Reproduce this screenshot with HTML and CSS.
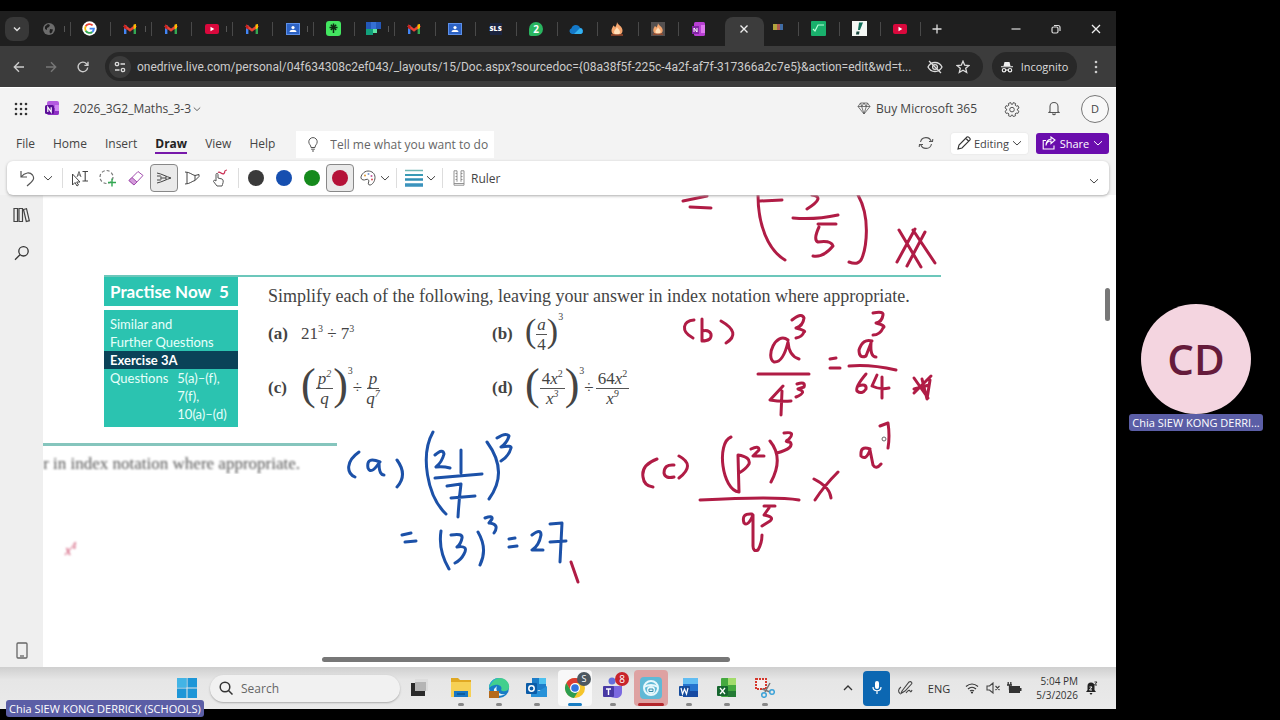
FILE: index.html
```html
<!DOCTYPE html>
<html lang="en">
<head>
<meta charset="utf-8">
<meta name="viewport" content="width=device-width, initial-scale=1">
<title>Shared screen</title>
<link rel="stylesheet" href="styles.css">
</head>
<body>
<svg class="defs" aria-hidden="true">
  <symbol id="gmail" viewBox="0 0 14 12"><path d="M1 11V2h2.400v9z" fill="#4285f4"/><path d="M10.600 11V2H13v9z" fill="#34a853"/><path d="M1 2.500 7 7.200 13 2.500" fill="none" stroke="#ea4335" stroke-width="2.600"/><path d="M10.600 1.500 13 1v4l-2.400 1.600z" fill="#fbbc04"/><path d="M1 1.500v3.800l2.400 1.500V3z" fill="#c5221f"/></symbol>
  <symbol id="youtube" viewBox="0 0 14 14"><rect y="2" width="14" height="10" rx="2" fill="#d9083c"/><path d="M5.500 4.800v4.400L9.300 7z" fill="#fff"/></symbol>
  <symbol id="classroom" viewBox="0 0 14 14"><rect y="1" width="14" height="12" fill="#5c8fe8"/><rect x="1" y="2" width="12" height="10" fill="#2c62c4"/><circle cx="7" cy="5.500" r="1.600" fill="#fff"/><path d="M3.500 10c0-3 7-3 7 0z" fill="#fff"/></symbol>
  <symbol id="flame" viewBox="0 0 14 14"><path d="M7 0c.5 3 5.500 4 5.500 8.500C12.500 12 10 13 7 13s-5.500-1-5.500-4.500C1.500 6 3 5 3.300 3.500 4.500 4 5 5 5 5.500 6 4 7 2 7 0z" fill="#f5a66f"/><path d="M7 5c.5 2 3 2.500 3 5 0 2-1.500 3-3 3s-3-1-3-3c0-2 2.500-3 3-5z" fill="#ffe0ba"/><path d="M1 13h12" stroke="#9c4a2c" stroke-width="1.500"/></symbol>
  <symbol id="chev" viewBox="0 0 10 10"><path d="M1 3.200 5 7l4-3.800" fill="none" stroke="currentColor"/></symbol>
</svg>

<div class="meeting">
<main class="screen">

  <nav class="tabstrip" aria-label="Browser tabs">
    <button class="tab-search" aria-label="Search tabs"><svg width="10" height="10"><path d="M2 3.500 5 6.500 8 3.500" fill="none" stroke="#ddd" stroke-width="1.500"/></svg></button>
    <button class="tab mark" aria-label="Web page"><svg width="14" height="14" viewBox="0 0 14 14"><circle cx="7" cy="7" r="6" fill="#6c6c6c"/><path d="M3 4.500 6 2l2 1-1 2-2 1v2l-2-1zM8 7l3 .5-1 3-2 1-.5-2z" fill="#1f1f1f"/></svg></button>
    <button class="tab" aria-label="Google"><svg width="15" height="15" viewBox="0 0 15 15"><circle cx="7.500" cy="7.500" r="7.200" fill="#fff"/><g fill="none" stroke-width="1.900"><path d="M10.600 4.400A4.400 4.400 0 0 0 3.700 5.300" stroke="#ea4335"/><path d="M3.700 5.300a4.400 4.400 0 0 0 0 4.400" stroke="#fbbc04"/><path d="M3.700 9.700a4.400 4.400 0 0 0 6.600 1.200" stroke="#34a853"/><path d="M10.300 10.900A4.400 4.400 0 0 0 11.900 7.600H7.600" stroke="#4285f4"/></g></svg></button>
    <button class="tab mark" aria-label="Gmail"><svg width="14" height="12"><use href="#gmail"/></svg></button>
    <button class="tab" aria-label="Gmail"><svg width="14" height="12"><use href="#gmail"/></svg></button>
    <button class="tab mark" aria-label="YouTube"><svg width="14" height="14"><use href="#youtube"/></svg></button>
    <button class="tab" aria-label="Gmail"><svg width="14" height="12"><use href="#gmail"/></svg></button>
    <button class="tab mark" aria-label="Classroom"><svg width="14" height="14"><use href="#classroom"/></svg></button>
    <button class="tab" aria-label="Linktree"><svg width="15" height="15" viewBox="0 0 15 15"><rect width="15" height="15" rx="3" fill="#43e660"/><path d="M7.500 2.500v9.500M3.500 6.500h8M4.800 3.800l5.400 5.200M10.200 3.800 4.800 9" stroke="#0c2b12" stroke-width="1.500"/></svg></button>
    <button class="tab mark" aria-label="Tiles"><svg width="15" height="15" viewBox="0 0 15 15"><path d="M0 1h15v7H0z" fill="#2458b8"/><path d="M5 1h5v7H5z" fill="#3570d4"/><path d="M0 8h7v6H0z" fill="#12a17c"/><path d="M7 8h4v4H7z" fill="#5be5a4"/></svg></button>
    <button class="tab" aria-label="Gmail"><svg width="14" height="12"><use href="#gmail"/></svg></button>
    <button class="tab" aria-label="Classroom"><svg width="14" height="14"><use href="#classroom"/></svg></button>
    <button class="tab" aria-label="SLS"><span class="sls">SLS</span></button>
    <button class="tab" aria-label="WhatsApp"><span class="whats">2</span></button>
    <button class="tab" aria-label="OneDrive"><svg width="15" height="12" viewBox="0 0 15 12"><path d="M3 11a3 3 0 0 1-.5-5.800A4.500 4.500 0 0 1 11 4.800 3.200 3.200 0 0 1 12 11z" fill="#1478c8"/><path d="M5 11 11 5a3.200 3.200 0 0 1 1 6z" fill="#35b2ef"/></svg></button>
    <button class="tab" aria-label="Flame"><svg width="14" height="14"><use href="#flame"/></svg></button>
    <button class="tab" aria-label="Flame"><span class="flame-box"><svg width="12" height="12"><use href="#flame"/></svg></span></button>
    <button class="tab last" aria-label="OneNote"><svg width="14" height="14" viewBox="0 0 14 14"><rect x="2" width="11" height="14" rx="1.500" fill="#b83fd3"/><path d="M9 3h4v8H9z" fill="#dd78ee"/><path d="M0 4h7v8H0z" fill="#8224a5"/><path d="M2 10V6l3 4V6" stroke="#fff" fill="none"/></svg></button>
    <button class="tab-active" aria-label="Close tab"><svg width="10" height="10"><path d="M1.500 1.500l7 7m0-7-7 7" stroke="#eee" stroke-width="1.400"/></svg></button>
    <button class="tab" aria-label="Gallery"><svg width="12" height="14" viewBox="0 0 12 14"><path d="M1 2h4v6H1z" fill="#b1a53e"/><path d="M5 2h3v6H5z" fill="#b35a50"/><path d="M8 2h3v6H8z" fill="#416ca4"/></svg></button>
    <button class="tab" aria-label="Maths"><svg width="15" height="15" viewBox="0 0 15 15"><rect width="15" height="15" rx="1" fill="#19b06c"/><path d="m2 8 2 2 3-6h6" fill="none" stroke="#b6ffd8" stroke-width="1.200"/></svg></button>
    <button class="tab" aria-label="Notes"><svg width="15" height="15" viewBox="0 0 15 15"><rect width="15" height="15" fill="#f4f7f4"/><path d="M7 1.500h4L8 9H6z" fill="#11705a"/><path d="M4.500 10.500h3L7 13.500H4z" fill="#17443c"/></svg></button>
    <button class="tab" aria-label="YouTube"><svg width="14" height="14"><use href="#youtube"/></svg></button>
    <button class="tab-new" aria-label="New tab"><svg width="10" height="10"><path d="M5 .5v9M.5 5h9" stroke="#ddd" stroke-width="1.300"/></svg></button>
    <button class="win first" aria-label="Minimise"><svg width="10" height="10"><path d="M.5 5h9" stroke="#ddd" stroke-width="1.200"/></svg></button>
    <button class="win" aria-label="Restore"><svg width="10" height="10"><rect x="1" y="3" width="6" height="6" rx="1.500" fill="none" stroke="#ddd" stroke-width="1.200"/><path d="M3 1.500h4A2 2 0 0 1 9 3.500V7" fill="none" stroke="#ddd" stroke-width="1.200"/></svg></button>
    <button class="win" aria-label="Close"><svg width="10" height="10"><path d="m1 1 8 8m0-8-8 8" stroke="#eee" stroke-width="1.300"/></svg></button>
  </nav>

  <div class="addressbar">
    <button class="nav-btn" aria-label="Back"><svg width="12" height="12"><path d="M11 6H1.500M6 1.300 1.300 6 6 10.700" fill="none" stroke="#ccc" stroke-width="1.400"/></svg></button>
    <button class="nav-btn" aria-label="Forward"><svg width="12" height="12"><path d="M1 6h9.500M6 1.300 10.700 6 6 10.700" fill="none" stroke="#777" stroke-width="1.400"/></svg></button>
    <button class="nav-btn" aria-label="Reload"><svg width="12" height="12"><path d="M10.700 6.500A4.800 4.800 0 1 1 9.500 2.700L11 4.200M11 .8v3.600H7.400" fill="none" stroke="#ccc" stroke-width="1.400"/></svg></button>
    <div class="omnibox">
      <button class="site-info" aria-label="Site information"><svg width="12" height="12"><g fill="none" stroke="#ddd" stroke-width="1.300"><circle cx="3" cy="3" r="1.700"/><path d="M6.500 3H11M1 9h4.500"/><circle cx="9" cy="9" r="1.700"/></g></svg></button>
      <input class="url" type="text" aria-label="Address" value="onedrive.live.com/personal/04f634308c2ef043/_layouts/15/Doc.aspx?sourcedoc={08a38f5f-225c-4a2f-af7f-317366a2c7e5}&amp;action=edit&amp;wd=t...">
      <button class="omni-btn" aria-label="Tracking blocked"><svg width="16" height="14" viewBox="0 0 16 14"><g fill="none" stroke="#ddd" stroke-width="1.300"><path d="M1 7c3-6 11-6 14 0-3 6-11 6-14 0z"/><circle cx="8" cy="7" r="2.400"/><path d="m2 1 12 12"/></g></svg></button>
      <button class="omni-btn" aria-label="Bookmark"><svg width="14" height="14" viewBox="0 0 14 14"><path d="m7 1.200 1.700 4 4.300.3-3.300 2.800 1 4.200L7 10.300l-3.700 2.200 1-4.200L1 5.500l4.300-.3z" fill="none" stroke="#ddd" stroke-width="1.300"/></svg></button>
    </div>
    <button class="incognito"><svg width="12" height="12"><path d="M3.500 1h5L9.500 5h-7zM0 5.200h12v1H0z" fill="#eee"/><g fill="none" stroke="#eee" stroke-width="1.200"><circle cx="3" cy="9.200" r="1.700"/><circle cx="9" cy="9.200" r="1.700"/><path d="M4.700 9h2.600"/></g></svg>Incognito</button>
    <button class="kebab" aria-label="Browser menu"><svg width="4" height="14"><g fill="#ccc"><circle cx="2" cy="2" r="1.300"/><circle cx="2" cy="7" r="1.300"/><circle cx="2" cy="12" r="1.300"/></g></svg></button>
  </div>

  <header class="suite">
    <button class="waffle" aria-label="App launcher"><svg width="14" height="14"><g fill="#333"><circle cx="2" cy="2" r="1.300"/><circle cx="7" cy="2" r="1.300"/><circle cx="12" cy="2" r="1.300"/><circle cx="2" cy="7" r="1.300"/><circle cx="7" cy="7" r="1.300"/><circle cx="12" cy="7" r="1.300"/><circle cx="2" cy="12" r="1.300"/><circle cx="7" cy="12" r="1.300"/><circle cx="12" cy="12" r="1.300"/></g></svg></button>
    <svg class="app-logo" width="14" height="15" viewBox="0 0 14 15"><rect x="2" y="0" width="12" height="14" rx="2" fill="#b45ae0"/><path d="M2 7h12v5a2 2 0 0 1-2 2H4a2 2 0 0 1-2-2z" fill="#8e2fc4"/><path d="M10 4h4v6h-4z" fill="#cf86f2"/><rect y="4" width="9" height="9" rx="1.500" fill="#5b0f97"/><path d="M2.800 11V6.200L6.200 11V6.200" fill="none" stroke="#fff" stroke-width="1.200"/></svg>
    <button class="doc-title">2026_3G2_Maths_3-3 <svg width="8" height="8"><use href="#chev"/></svg></button>
    <a class="buy" href="#"><svg width="14" height="13" viewBox="0 0 14 13"><path d="M3.500 1h7L13 4.500 7 12 1 4.500zM1 4.500h12M3.500 1l1.200 3.500L7 12l2.300-7.500L10.500 1M4.700 4.500 7 1l2.300 3.500" fill="none" stroke="#555" stroke-width=".8"/></svg>Buy Microsoft 365</a>
    <button class="suite-btn" aria-label="Settings"><svg width="16" height="16" viewBox="0 0 16 16"><path d="m6.700 1.500.5 1.700h1.600l.5-1.700 2.300 1-.4 1.700 1 1 1.800-.5 1 2.300-1.600 1 0 1.200 1.500 1-1 2.200-1.800-.4-1 1 .5 1.700-2.300.9L8.500 14h-1l-.8 1.600-2.300-.9.500-1.700-1-1-1.800.4-1-2.200 1.500-1V8l-1.600-1 1-2.300 1.800.5 1-1-.4-1.700z" fill="none" stroke="#555"/><circle cx="8" cy="8.600" r="2.300" fill="none" stroke="#555"/></svg></button>
    <button class="suite-btn" aria-label="Notifications"><svg width="12" height="15" viewBox="0 0 12 15"><path d="M2 10.500V5.500a4 4 0 0 1 8 0v5l1 1H1zM4.500 12.500c.5 1.500 2.500 1.500 3 0" fill="none" stroke="#555" stroke-width="1.100"/></svg></button>
    <button class="avatar" aria-label="Account">D</button>
  </header>

  <nav class="menubar" aria-label="Ribbon tabs">
    <button>File</button><button>Home</button><button>Insert</button><button class="on">Draw</button><button>View</button><button>Help</button>
    <label class="tellme"><svg width="10" height="15" viewBox="0 0 10 15"><path d="M3 10.500C3 8 .8 7.500.8 4.800a4.200 4.200 0 0 1 8.400 0C9.200 7.500 7 8 7 10.500zM3.200 12.200h3.600M4 14h2" fill="none" stroke="#555"/></svg><input type="text" placeholder="Tell me what you want to do" aria-label="Tell me what you want to do"></label>
    <button class="sync" aria-label="Sync"><svg width="16" height="14" viewBox="0 0 16 14"><path d="M2.500 6A5.600 5.600 0 0 1 13.300 5.500M13.500 8A5.600 5.600 0 0 1 2.700 8.500M11 5.500h3.500L14.800 3M5 8.500H1.500L1.200 11" fill="none" stroke="#555" stroke-width="1.100"/></svg></button>
    <button class="editing"><svg width="14" height="14" viewBox="0 0 14 14"><path d="m1 13 1-4 8-8c1-1 4 1.500 3 3l-8 8zM9 2.500 11.500 5" fill="none" stroke="#333" stroke-width="1.100"/></svg>Editing<svg width="10" height="10"><use href="#chev"/></svg></button>
    <button class="share"><svg width="14" height="14" viewBox="0 0 14 14"><path d="M4 4.500H1.200V13H12V9.500M4 9.500C4.500 6 6.500 5 9 5V7.500L13 4 9 1v2.200C5.500 3.500 4 6 4 9.500z" fill="none" stroke="#fff" stroke-width="1.100"/></svg>Share<svg width="10" height="10"><use href="#chev"/></svg></button>
  </nav>

  <div class="ribbon-area">
  <section class="ribbon" aria-label="Draw tools">
    <button class="w28" aria-label="Undo"><svg width="16" height="17" viewBox="0 0 16 17"><path d="M2 1v6h6M2 7c4-5 9-5 11.500-2 2.500 3.500 1 5.500-5.500 11" fill="none" stroke="#555" stroke-width="1.200"/></svg></button>
    <button class="w14" aria-label="Undo options"><svg width="10" height="10"><use href="#chev"/></svg></button>
    <i class="sep wide"></i>
    <button class="w28" aria-label="Select objects or type"><svg width="18" height="17" viewBox="0 0 18 17"><path d="M1.500 4v11l2.500-2.500L6 16l1.500-1-1.800-3H9z" fill="none" stroke="#444"/><path d="m6 7 2-5.500L10 7M6.800 5h2.400" fill="none" stroke="#555" stroke-width=".9"/><path d="M11.500 1.500H17M14.200 1.500V11M11.500 11H17" stroke="#444" stroke-width="1.100"/></svg></button>
    <button class="w28" aria-label="Lasso select"><svg width="18" height="18" viewBox="0 0 18 18"><circle cx="7.500" cy="8" r="6.500" fill="none" stroke="#777" stroke-width="1.200" stroke-dasharray="3 2"/><path d="M9 13.500h8M13 9.500v8" stroke="#32a852" stroke-width="1.400"/></svg></button>
    <button class="w28" aria-label="Eraser"><svg width="16" height="16" viewBox="0 0 16 16"><path d="M1 10.500 10 1.500l5 4L6 15z" fill="#fff" stroke="#a24fae"/><path d="m1 10.500 3-3L9 12l-3 3z" fill="#d49bdb" stroke="#a24fae"/></svg></button>
    <button class="w28 sel" aria-label="Pen" aria-pressed="true"><svg width="16" height="12" viewBox="0 0 16 12"><path d="M1 1c5 1 9 3.500 14 5-5 1.500-9 4-14 5M1 4h3.500c1 .7 1 1.300 0 2M1 8h3.500c1-.7 1-1.300 0-2M5 6h5M10 4.300v3.400" fill="none" stroke="#444"/></svg></button>
    <button class="w28" aria-label="Highlighter"><svg width="16" height="14" viewBox="0 0 16 14"><path d="M1 1c5 0 7 3 10 3.500v5C8 10 6 13 1 13M3 1.500v11M11 4.500 15 3.500v2L11 9.500" fill="none" stroke="#444"/></svg></button>
    <button class="w28" aria-label="Draw with touch"><svg width="16" height="18" viewBox="0 0 16 18"><path d="M4 12V5.500c0-1.500 2-1.500 2 0V9l4 1c1.500.5 1.500 3 .5 5.500L10 17H5L1.500 12.500 2.300 11z" fill="none" stroke="#555"/><path d="M6 3.500c2-2 4 3 6 1s-1-3 3-3.500" fill="none" stroke="#c92b50" stroke-width="1.200"/></svg></button>
    <i class="sep"></i>
    <button class="w28 swatch" aria-label="Black pen"><b class="c-black"></b></button>
    <button class="w28 swatch" aria-label="Blue pen"><b class="c-blue"></b></button>
    <button class="w28 swatch" aria-label="Green pen"><b class="c-green"></b></button>
    <button class="w28 swatch sel" aria-label="Red pen" aria-pressed="true"><b class="c-red"></b></button>
    <button class="w28" aria-label="More colours"><svg width="16" height="16" viewBox="0 0 16 16"><path d="M8 1c4 0 7 2.500 7 6.500S12 15 10 15s-2-1.500-1.300-3S8 8.500 6 9.500 1.500 10 1 8 3.500 1 8 1z" fill="none" stroke="#555"/><circle cx="5" cy="5.500" r="1" fill="#df9a35"/><circle cx="8.500" cy="4" r="1" fill="#7a9bd0"/><circle cx="11.500" cy="6" r="1" fill="#c05a9f"/><circle cx="12" cy="9.500" r="1" fill="#d65252"/></svg></button>
    <button class="w14 tight" aria-label="Colour options"><svg width="10" height="10"><use href="#chev"/></svg></button>
    <i class="sep"></i>
    <button class="w28" aria-label="Thickness"><svg width="18" height="18"><path d="M0 1.500h18" stroke="#6fb6b4" stroke-width="1.500"/><path d="M0 6h18" stroke="#399ab5" stroke-width="2"/><path d="M0 10.500h18" stroke="#318fb5" stroke-width="2.500"/><path d="M0 16h18" stroke="#3b93bd" stroke-width="3.500"/></svg></button>
    <button class="w14 tight" aria-label="Thickness options"><svg width="10" height="10"><use href="#chev"/></svg></button>
    <i class="sep"></i>
    <button class="ruler"><svg width="12" height="16" viewBox="0 0 12 16"><path d="M4 .8H1v14.400h10V.8H8M1 13.500h10M4 .8v11M8 .8v11M2.500 3.500H4M2.500 6.500H4M2.500 9.500H4M8 3.500h1.500M8 6.500h1.500M8 9.500h1.500" fill="none" stroke="#888" stroke-width=".9"/></svg>Ruler</button>
    <button class="collapse" aria-label="Collapse ribbon"><svg width="10" height="10"><use href="#chev"/></svg></button>
  </section>
  </div>

  <div class="work">
    <aside class="rail">
      <button aria-label="Notebooks"><svg width="17" height="16" viewBox="0 0 17 16"><path d="M1 1.500h3.500v13H1zM6 1.500h3.500v13H6zM10.500 2.500l3-.8 2.800 12-3 .8z" fill="none" stroke="#444" stroke-width="1.200"/></svg></button>
      <button aria-label="Search notes"><svg width="16" height="16" viewBox="0 0 16 16"><circle cx="9.500" cy="6.300" r="4.700" fill="none" stroke="#333" stroke-width="1.300"/><path d="M6 9.800 1 14.800" stroke="#333" stroke-width="1.300"/></svg></button>
      <button class="phone" aria-label="Mobile app"><svg width="12" height="17" viewBox="0 0 12 17"><rect x="1" y="1" width="10" height="15" rx="1" fill="none" stroke="#666" stroke-width="1.300"/><path d="M4 14h4" stroke="#666" stroke-width="1.300"/></svg></button>
    </aside>

    <div class="canvas">
      <article class="sheet">
        <div class="practice">
          <h2>Practise Now&nbsp; 5</h2>
          <div class="refs">
            <p>Similar and<br>Further Questions</p>
            <p class="exercise">Exercise 3A</p>
            <div class="q-refs"><span>Questions</span><span>5(a)–(f),<br>7(f),<br>10(a)–(d)</span></div>
          </div>
        </div>
        <div class="questions">
          <p>Simplify each of the following, leaving your answer in index notation where appropriate.</p>
          <div class="q-grid">
            <div class="q"><strong>(a)</strong><span>21<sup>3</sup> ÷ 7<sup>3</sup></span></div>
            <div class="q"><strong>(b)</strong><span class="par mid">(</span><span class="frac slim"><em>a</em><span>4</span></span><span class="par mid">)</span><sup class="pow">3</sup></div>
            <div class="q"><strong>(c)</strong><span class="par">(</span><span class="frac"><em>p<sup>2</sup></em><em>q</em></span><span class="par">)</span><sup class="pow">3</sup><span class="op">÷</span><span class="frac"><em>p</em><em>q<sup>7</sup></em></span></div>
            <div class="q"><strong>(d)</strong><span class="par">(</span><span class="frac"><span>4<em>x</em><sup>2</sup></span><em>x<sup>3</sup></em></span><span class="par">)</span><sup class="pow">3</sup><span class="op">÷</span><span class="frac"><span>64<em>x</em><sup>2</sup></span><em>x<sup>9</sup></em></span></div>
          </div>
        </div>
      </article>

      <div class="old-clip"><p>r in index notation where appropriate.</p></div>
      <p class="old-ink">x<sup>4</sup></p>

      <svg class="ink" viewBox="43 195 1073 472" role="img" aria-label="Handwritten working for questions (a), (b) and (c)">
        <g class="red">
          <path d="M683 201 707 196M690 207 711 208M758 195C758 225 768 250 785 260M760 201 782 200M812 195Q826 197 807 209M793 218Q815 220 838 215M818 224H836M819 227Q813 240 818 242Q831 240 833 246Q823 258 813 256M858 195C871 218 866 248 862 258Q859 266 849 262M899 230 921 267M915 229 897 262M913 230 935 263M925 232 907 266"/>
          <path d="M694 320C683 321 680 331 693 338M702 319V341Q712 341 711 334Q709 329 702 331M721 321Q742 333 726 343"/>
          <path d="M788 340C776 331 765 357 774 362Q783 363 788 342Q789 356 799 359M792 320Q802 312 804 318Q803 326 796 328Q807 331 804 332Q802 337 796 338M758 374H809M783 386 770 400Q781 402 791 401M782 391 781 415M797 384Q806 381 804 387L798 389Q808 392 796 397"/>
          <path d="M830 359 836 358M830 368 840 368M872 341Q863 338 859 350Q859 359 866 356L871 343Q870 357 876 357M873 313Q884 311 883 315Q882 322 876 323Q887 326 883 328Q880 335 873 335M849 366Q870 364 896 370M866 374Q855 387 857 391Q862 395 866 389Q867 383 858 386M877 375 872 386Q880 390 889 388M882 377V398M914 378 928 398M931 376 914 393M922 379 927 399 930 380M914 389 929 385"/>
          <path d="M657 459Q641 465 643 477Q644 486 653 487M674 465Q664 464 664 473Q665 479 674 477M679 456Q696 465 679 478M731 437C716 443 722 490 739 492L738 455Q751 457 749 464Q746 469 739 473M751 449Q759 445 759 450L753 456H764M770 441Q784 458 771 482M784 433Q796 431 789 439Q783 442 790 442Q795 448 777 453M700 500Q777 496 799 500M752 514Q741 513 744 523Q748 527 753 515L753 546Q753 552 758 550Q762 543 762 535M764 506H775M769 508 764 515Q775 517 770 521L762 526M814 479Q830 487 831 498M838 472Q824 486 815 500M870 449Q860 445 861 456Q866 461 870 450L873 465Q876 470 881 464M880 426 888 423Q890 436 888 448"/>
          <path d="M571 562 578 582"/>
        </g>
        <g class="blue">
          <path d="M359 452C346 461 346 473 355 477M380 462Q366 456 368 468Q371 475 379 463Q379 475 384 475M397 460Q408 475 397 487M433 432C420 455 427 496 446 514M435 455Q443 448 444 454Q442 462 436 467Q443 466 450 468M461 450V473M435 478 482 474M447 486 461 484Q459 499 458 517M451 498 475 496M487 442Q509 472 489 499M497 438Q506 432 509 436Q507 443 501 447Q512 445 511 448Q509 456 501 461"/>
          <path d="M402 535 411 533M405 542 416 541M441 531Q438 550 449 569M451 535Q463 533 462 538Q461 544 457 547Q469 545 464 554Q461 560 455 563M478 532Q488 549 480 565M485 518Q493 515 492 519L489 523Q500 524 494 533M509 539 515 538M509 547 517 546M532 535Q541 528 541 535Q539 546 532 550H543M550 524 562 523Q561 544 560 562M550 542 566 541"/>
        </g>
        <circle class="pen-dot" cx="884" cy="439" r="2"/>
      </svg>
      <i class="vbar"></i><i class="hbar"></i>
    </div>
  </div>

  <footer class="taskbar">
    <div class="apps">
      <button class="start" aria-label="Start"><svg width="20" height="20" viewBox="0 0 20 20"><path d="M0 0h9.500v9.500H0zM10.500 0H20v9.500h-9.500zM0 10.500h9.500V20H0zM10.500 10.500H20V20h-9.500z" fill="#1d96d7"/><path d="M0 0h9.500v9.500H0z" fill="#43b4e5"/></svg></button>
      <label class="tb-search"><svg width="14" height="14" viewBox="0 0 14 14"><circle cx="6" cy="6" r="4.800" fill="none" stroke="#333" stroke-width="1.500"/><path d="m9.500 9.500 4 4" stroke="#333" stroke-width="1.500"/></svg><input type="text" placeholder="Search" aria-label="Search"></label>
      <button class="app" aria-label="Task view"><svg width="18" height="18" viewBox="0 0 18 18"><path d="M5 0h13v12H5z" fill="#ddd"/><path d="M1 4h14v13H1z" fill="#2a2a2a"/><path d="M5 3h11v9H5z" fill="#b5b5b5"/></svg></button>
      <button class="app run" aria-label="File Explorer"><svg width="22" height="20" viewBox="0 0 22 20"><path d="M1 0h7l2 2h11v17H1z" fill="#e0a823"/><path d="M1 4h20v15H1z" fill="#f6d055"/><path d="M4 13h14v6H4z" fill="#1877c4"/><path d="M7 16h8" stroke="#0d5490" stroke-width="1.500"/></svg></button>
      <button class="app run" aria-label="Edge"><svg width="22" height="22" viewBox="0 0 22 22"><circle cx="11" cy="11" r="10" fill="#187cc6"/><path d="M1 11C1 5 6 1 11 1c7 0 11 5 10 10-1 4-7 4-8 2 2-3-2-6-6-5-3 .5-5 2-6 3z" fill="#42cf8d"/><path d="M1 11c0-6 5-10 10-10-4 1-7 3-10 10z" fill="#28a9d8"/><path d="M9 9c-2 4 1 9 8 8-6 4-12 0-11-5z" fill="#e5f5fa"/><path d="M1 14h10v7H1z" fill="#b56b1c"/></svg></button>
      <button class="app run" aria-label="Outlook"><svg width="22" height="20" viewBox="0 0 22 20"><path d="M6 0h14v12H6z" fill="#1d7dc9"/><path d="M13 0h7v6h-7z" fill="#4dc1ef"/><path d="M5 8l8 5 8-5v11H5z" fill="#2791d8"/><rect y="5" width="11" height="11" rx="1" fill="#0b5ca8"/><circle cx="5.500" cy="10.500" r="2.700" fill="none" stroke="#fff" stroke-width="1.500"/></svg></button>
      <button class="app run wide-run lit" aria-label="Chrome"><svg width="22" height="22" viewBox="0 0 22 22"><circle cx="11" cy="11" r="10" fill="#f5c52b"/><path d="M2.300 6A10 10 0 0 1 19.700 6H11l-4 8z" fill="#dc3c32"/><path d="M2.300 6A10 10 0 0 0 10 21l5-8-8 1z" fill="#2d9d50"/><circle cx="11" cy="11" r="5" fill="#fff"/><circle cx="11" cy="11" r="3.800" fill="#3375df"/></svg><span class="badge dark">S</span></button>
      <button class="app run" aria-label="Teams"><svg width="20" height="22" viewBox="0 0 20 22"><circle cx="9" cy="4" r="3.500" fill="#6670dc"/><path d="M4 9h15v6c0 4-3 6-6 6-5 0-9-3-9-6z" fill="#7b69e0"/><rect y="9" width="11" height="11" rx="1" fill="#4839a4"/><path d="M3 12h5M5.500 12v6" stroke="#fff" stroke-width="1.400"/></svg><span class="badge">8</span></button>
      <button class="app active" aria-label="Screen sharing"><svg width="22" height="22" viewBox="0 0 22 22"><rect width="22" height="22" rx="4" fill="#60b9d6"/><circle cx="11" cy="11" r="7" fill="none" stroke="#e6f8fc" stroke-width="2"/><path d="M4 10q7-4 14 0" fill="none" stroke="#e6f8fc" stroke-width="2"/><circle cx="11" cy="13" r="4" fill="#e6f8fc"/><path d="M9 12v2.500h4V12z" fill="none" stroke="#348ba9"/></svg></button>
      <button class="app run" aria-label="Word"><svg width="20" height="20" viewBox="0 0 20 20"><rect x="4" width="15" height="19" rx="1" fill="#2574cf"/><path d="M4 0h15v6H4z" fill="#62bdf2"/><path d="M4 13h15v6H4z" fill="#174aa2"/><rect y="8" width="11" height="10" rx="1" fill="#164d9d"/><path d="m2 10 1.500 6 2-5 2 5L9 10" fill="none" stroke="#fff" stroke-width="1.200"/></svg></button>
      <button class="app run" aria-label="Excel"><svg width="20" height="20" viewBox="0 0 20 20"><rect x="4" width="15" height="19" rx="1" fill="#45a93f"/><path d="M11 0h8v7h-8z" fill="#a2dc6c"/><path d="M11 13h8v6h-8z" fill="#247b35"/><rect y="8" width="11" height="10" rx="1" fill="#16662f"/><path d="m3 10 5 6m0-6-5 6" stroke="#fff" stroke-width="1.300"/></svg></button>
      <button class="app run" aria-label="Snipping Tool"><svg width="20" height="20" viewBox="0 0 20 20"><rect x="1" y="1" width="10" height="10" fill="#f5efee" stroke="#d4382d" stroke-width="2" stroke-dasharray="2 1"/><path d="M15 5 10 14M7 11l8 3" stroke="#777" stroke-width="1.500"/><circle cx="17" cy="14" r="2.300" fill="none" stroke="#3ba2d8" stroke-width="1.500"/><circle cx="9" cy="17" r="2.300" fill="none" stroke="#3ba2d8" stroke-width="1.500"/></svg></button>
    </div>
    <div class="tray">
      <button class="up" aria-label="Hidden icons"><svg width="10" height="10"><path d="M1 7l4-4 4 4" fill="none" stroke="#333" stroke-width="1.300"/></svg></button>
      <button class="mic" aria-label="Microphone"><svg width="12" height="16" viewBox="0 0 12 16"><rect x="4" y="1" width="4" height="8" rx="2" fill="#fff"/><path d="M2 7c0 5 8 5 8 0M6 11v3" fill="none" stroke="#fff" stroke-width="1.200"/></svg></button>
      <button class="pen" aria-label="Pen menu"><svg width="15" height="14" viewBox="0 0 15 14"><path d="M4 10 11 1c2-1 3.500.5 2.500 2L7 10l-4 2.500zM3 6C0 8 0 11 2 12.500M8 12q3-4 4-2t2-1" fill="none" stroke="#444" stroke-width="1.100"/></svg></button>
      <button class="lang">ENG</button>
      <button class="status" aria-label="Network, sound and battery"><svg width="14" height="12" viewBox="0 0 14 12"><path d="M1 4.500q6-5 12 0M3 7q4-3.500 8 0M5 9q2-1.500 4 0" fill="none" stroke="#333" stroke-width="1.200"/><circle cx="7" cy="10.500" r="1.100" fill="#333"/></svg><svg width="14" height="12" viewBox="0 0 14 12"><path d="M1 4h2.500L7 1v10L3.500 8H1zM9.500 4l4 4m0-4-4 4" fill="none" stroke="#444" stroke-width="1.100"/></svg><svg width="15" height="12" viewBox="0 0 15 12"><path d="M2 4h11v7H2zM13 6h1.500v3H13z" fill="#333"/><path d="M0 3h5M1.200 0v3M3.800 0v3M2.500 3v5" stroke="#333" stroke-width="1.300"/></svg></button>
      <time class="clock">5:04 PM<br>5/3/2026</time>
      <svg class="bell" width="13" height="15" viewBox="0 0 13 15"><path d="M1 11 2.500 9V5a3.500 3.500 0 0 1 7 0v4l1.500 2zM4.500 12h3l-1.500 2z" fill="#222"/><path d="M4.500 6H7L4.500 9H7" fill="none" stroke="#fff" stroke-width=".9"/><path d="M9.500 1H12L9.500 4H12" fill="none" stroke="#222" stroke-width=".9"/></svg>
    </div>
  </footer>
  <span class="name-tag presenter">Chia SIEW KONG DERRICK (SCHOOLS)</span>
</main>

<aside class="people">
  <div class="person"><div class="initials">CD</div><span class="name-tag">Chia SIEW KONG DERRI...</span></div>
</aside>
</div>
</body>
</html>
```
FILE: styles.css
```css
* { box-sizing: border-box; }
body { margin: 0; background: #000; color: #444; font-family: "Open Sans", "Noto Sans", sans-serif; font-size: 12px; }
p, h2 { margin: 0; }
button { border: 0; padding: 0; margin: 0; background: none; color: inherit; font: inherit; display: flex; align-items: center; justify-content: center; white-space: nowrap; flex-shrink: 0; }
input { border: 0; padding: 0; margin: 0; background: none; font: inherit; color: inherit; min-width: 0; outline: 0; }
svg { display: block; flex-shrink: 0; }
.defs { position: absolute; width: 0; height: 0; }

.meeting { display: flex; height: 100vh; }
.screen { position: relative; flex: 1; min-width: 0; display: flex; flex-direction: column; padding: 11px 0; }
.people { width: 164px; display: flex; align-items: center; justify-content: center; }

/* Browser tabs */
.tabstrip { display: flex; height: 35px; background: #1f1f1f; align-items: stretch; }
.tab-search { width: 24px; height: 24px; margin: 6px 0 0 5px; border-radius: 8px; background: #383838; }
.tab { position: relative; flex: 1 1 0; }
.tab::after { content: ""; position: absolute; right: -1px; top: 11px; width: 1px; height: 14px; background: #494949; }
.tab.last::after { display: none; }
.tab.mark::before { content: ""; position: absolute; right: 5px; top: 15px; width: 1px; height: 6px; background: #555; }
.tab-active { width: 39px; margin: 6px -6px 0 6px; border-radius: 8px 8px 0 0; background: #3c3c3c; align-items: flex-start; padding-top: 7px; }
.tab-new { width: 34px; }
.win { width: 40px; }
.win.first { margin-left: 42px; }
.sls { background: #1b2440; color: #fff; font-size: 7px; font-weight: 800; line-height: 12px; }
.whats { width: 14px; height: 14px; border-radius: 7px 7px 7px 2px; background: #29b560; color: #fff; font-size: 10px; font-weight: 700; line-height: 14px; }
.flame-box { padding: 1px; background: #545050; }

/* Address bar */
.addressbar { display: flex; align-items: center; height: 41px; padding: 0 8px 0 3px; background: #3c3c3c; color: #ddd; }
.nav-btn { width: 32px; height: 28px; }
.omnibox { flex: 1; min-width: 0; display: flex; align-items: center; height: 29px; margin: 0 9px 0 6px; border-radius: 15px; background: #282828; }
.site-info { width: 22px; height: 22px; margin: 0 6px 0 4px; border-radius: 11px; background: #3c3c3c; }
.url { flex: 1; color: #ccc; height: 20px; font-family: Roboto, sans-serif; }
.omni-btn { width: 28px; }
.omni-btn:last-child { margin-right: 6px; }
.incognito { width: 85px; height: 29px; gap: 8px; border-radius: 15px; background: #282828; font-size: 11px; }
.kebab { width: 24px; margin-left: 7px; }

/* Suite header */
.suite { display: flex; align-items: center; height: 42px; padding: 0 7px 0 8px; background: #f3f3f3; border-top: 1px solid #fff; }
.waffle { width: 25px; height: 28px; }
.app-logo { margin: 0 14px 0 12px; }
.doc-title { gap: 2px; }
.buy { display: flex; align-items: center; gap: 5px; margin: 0 20px 0 auto; color: #444; text-decoration: none; }
.suite-btn { width: 30px; margin-right: 12px; }
.avatar { width: 28px; height: 28px; border: 1px solid #777; border-radius: 14px; background: #f8f8f8; font-size: 11px; }

/* Ribbon tabs */
.menubar { display: flex; align-items: center; height: 32px; padding: 0 7px 4px 16px; background: #f3f3f3; gap: 18px; }
.menubar .on { color: #222; font-weight: 700; border-bottom: 2px solid #7719aa; margin-top: 2px; }
.tellme { display: flex; align-items: center; gap: 12px; width: 198px; height: 27px; margin: 3px auto 0 3px; padding-left: 12px; background: #fff; }
.tellme input { flex: 1; }
input::placeholder { color: #666; opacity: 1; }
.menubar .sync { width: 20px; margin-right: -3px; }
.menubar .editing { height: 21px; padding: 0 6px; gap: 3px; border-radius: 3px; background: #fff; margin-right: -10px; font-size: 11px; box-shadow: 0 0 2px #ddd; }
.menubar .share { width: 73px; height: 21px; gap: 4px; border-radius: 3px; background: #6a0dad; color: #fff; font-size: 11px; }

/* Draw tools */
.ribbon-area { position: relative; z-index: 2; padding: 0 7px; background: linear-gradient(90deg, #f3f3f3 50%, #f3f3f3); }
.ribbon { display: flex; align-items: center; height: 34px; padding: 0 0 0 6px; background: #fff; border-radius: 6px; box-shadow: 0 1px 3px #aaa; }
.w28 { width: 28px; height: 28px; }
.w14 { width: 14px; height: 28px; }
.ribbon .tight { margin-left: -4px; }
.sel { border: 1px solid #888; border-radius: 4px; background: #eaeaea; }
.sep { width: 1px; height: 20px; margin: 0 3px 0 4px; background: #ddd; }
.sep.wide { margin-left: 7px; }
.swatch b { width: 16px; height: 16px; border-radius: 8px; }
.c-black { background: #3a3a3a; }
.c-blue { background: #164fb0; }
.c-green { background: #158a1c; }
.c-red { background: #b51238; }
.ruler { gap: 6px; margin-left: 7px; }
.collapse { margin: 6px 10px 0 auto; }

/* Workspace */
.work { flex: 1; display: flex; min-height: 0; background: #efefef; }
.rail { width: 43px; display: flex; flex-direction: column; align-items: center; padding: 12px 0 8px; gap: 22px; background: #efefef; }
.phone { margin-top: auto; }
.canvas { position: relative; flex: 1; min-width: 0; overflow: hidden; background: #fff; }
.ink { position: absolute; left: 0; top: 0; width: 1073px; height: 472px; }
.ink g { fill: none; stroke-width: 3; stroke-linecap: round; stroke-linejoin: round; }
.ink .red { stroke: #b01c45; }
.ink .blue { stroke: #1c51a8; }
.pen-dot { fill: #fff; stroke: #666; }

.sheet { position: absolute; left: 61px; top: 80px; width: 837px; display: flex; border-top: 2px solid #6cc7bb; color: #444; }
.practice { width: 134px; font-family: Lato, sans-serif; color: #e6fffa; font-size: 13px; line-height: 18px; }
.practice h2 { padding: 0 6px; height: 29px; line-height: 30px; font-size: 17px; font-weight: 700; background: #2bc3b0; color: #fff; }
.refs { margin-top: 4px; padding: 5px 0 4px; background: #2bc3b0; }
.refs p, .q-refs { padding: 0 6px; }
.refs .exercise { background: #0a4258; color: #fff; font-weight: 700; }
.q-refs { display: flex; gap: 9px; }
.questions { flex: 1; padding: 8px 0 0 30px; font-family: "Liberation Serif", serif; font-size: 17px; line-height: 22px; white-space: nowrap; }
.questions p { font-size: 18px; }
.q-grid { display: grid; grid-template-columns: 224px 1fr; grid-template-rows: 54px 54px; }
.q { display: flex; align-items: center; }
.q strong { width: 33px; }
.q sup, .old-ink sup { font-size: 10px; line-height: 0; }
.frac { display: flex; flex-direction: column; align-items: center; }
.frac > * { line-height: 19px; padding: 0 2px; }
.frac.slim > * { padding: 0 1px; }
.frac > :first-child { border-bottom: 1px solid #555; }
.par { font-size: 44px; line-height: 44px; margin-top: -6px; }
.par.mid { font-size: 34px; line-height: 40px; }
.q .pow { align-self: flex-start; margin-top: 10px; }
.op { margin-right: 2px; }
.old-clip { position: absolute; left: 0; top: 248px; width: 294px; border-top: 3px solid #85c5bd; padding-top: 8px; overflow: hidden; font-family: "Liberation Serif", serif; font-size: 17px; line-height: 20px; color: #555; }
.old-clip p { filter: blur(1px); float: right; margin-right: 37px; white-space: nowrap; }
.old-ink { position: absolute; left: 22px; top: 346px; font: italic 14px/20px "Liberation Serif", serif; color: #c8385c; filter: blur(1px); }
.vbar { position: absolute; right: 6px; top: 93px; width: 5px; height: 33px; border-radius: 3px; background: #777; }
.hbar { position: absolute; left: 26%; bottom: 5px; width: 38%; height: 5px; border-radius: 3px; background: #777; }

/* Taskbar */
.taskbar { display: flex; justify-content: space-between; height: 42px; background: linear-gradient(#cfcfcf, #e6e6e6 30%, #eaeaea); color: #333; }
.apps { display: flex; align-items: center; padding-left: 168px; }
.start { width: 38px; }
.tb-search { display: flex; align-items: center; gap: 8px; width: 190px; height: 27px; margin: 0 0 0 4px; padding-left: 9px; border-radius: 14px; background: #f1f1f1; box-shadow: 0 1px 2px #aaa; }
.tb-search input { width: 130px; }
.app { position: relative; width: 34px; height: 36px; margin-left: 4px; border-radius: 4px; }
.tb-search + .app { margin-left: 2px; margin-right: 4px; }
.run::after, .active::after { content: ""; position: absolute; bottom: 0; left: 14px; width: 6px; height: 3px; border-radius: 2px; background: #888; }
.wide-run::after { left: 10px; width: 14px; background: #197dc3; }
.lit { background: #f8f8f8; }
.active { background: #dea2a2; }
.active::after { left: 4px; width: 26px; background: #b3262b; }
.badge { position: absolute; right: 1px; top: 2px; width: 14px; height: 14px; border-radius: 7px; background: #c8242b; color: #fff; font-size: 10px; line-height: 14px; }
.badge.dark { background: #4d5860; font-size: 9px; }
.tray { display: flex; align-items: center; padding-right: 18px; font-size: 10px; }
.up { width: 30px; }
.mic { width: 27px; height: 35px; border-radius: 4px; background: #0c67b2; }
.pen { width: 30px; }
.lang { width: 38px; font-size: 11px; }
.status { gap: 7px; margin: 0 4px 0 7px; }
.clock { width: 52px; text-align: right; line-height: 14px; }
.bell { margin-left: 7px; }

.name-tag { border-radius: 3px; background: #5b5ea6; color: #fff; font-size: 11px; line-height: 17px; padding: 0 3px; white-space: nowrap; }
.presenter { position: absolute; left: 6px; bottom: 3px; }
.person { display: flex; flex-direction: column; align-items: center; margin-right: 4px; padding-top: 14px; }
.initials { width: 110px; height: 110px; border-radius: 55px; background: #f4d5e0; color: #651b3b; font-size: 42px; font-weight: 600; line-height: 110px; text-align: center; }
```
